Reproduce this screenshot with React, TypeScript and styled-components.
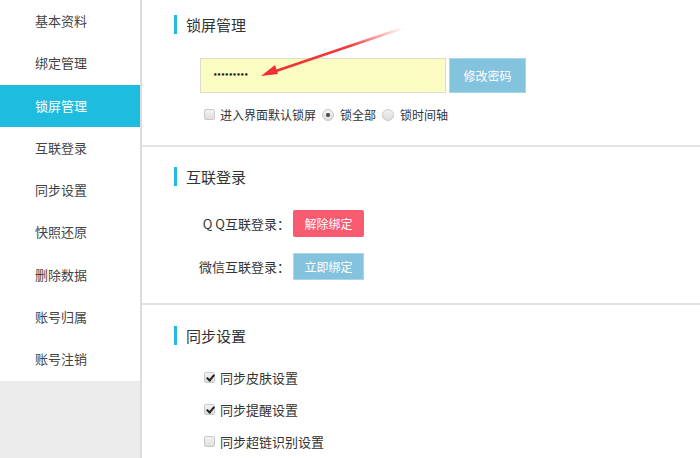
import styled, { createGlobalStyle } from "styled-components";

const GlobalStyle = createGlobalStyle`
  body {
    margin: 0;
    font-family: "Noto Sans CJK SC", "Liberation Sans", sans-serif;
    color: #333;
    background: #fff;
  }
`;

const menu = [
  "基本资料",
  "绑定管理",
  "锁屏管理",
  "互联登录",
  "同步设置",
  "快照还原",
  "删除数据",
  "账号归属",
  "账号注销",
];

const App = () => {
  return (
    <Page>
      <GlobalStyle />
      <Sidebar>
        <Menu>
          {menu.map((m) => (
            <MenuItem key={m} $active={m === "锁屏管理"}>
              {m}
            </MenuItem>
          ))}
        </Menu>
        <SideFill />
      </Sidebar>
      <Main>
        <Section $height={147} $top={15}>
          <Header>
            <Bar />
            <Title>锁屏管理</Title>
          </Header>
          <PwdRow>
            <PwdInput>•••••••••</PwdInput>
            <BlueButton $w={77} $h={35}>修改密码</BlueButton>
          </PwdRow>
          <OptionRow>
            <Box />
            <OptText>进入界面默认锁屏</OptText>
            <Radio $on />
            <OptText>锁全部</OptText>
            <Radio />
            <OptText>锁时间轴</OptText>
          </OptionRow>
          <Arrow width="150" height="60" viewBox="0 0 150 60">
            <defs>
              <linearGradient id="ag" x1="0" y1="1" x2="1" y2="0">
                <stop offset="0" stopColor="#f03030" />
                <stop offset="0.6" stopColor="#f23a3a" />
                <stop offset="1" stopColor="#ff4040" stopOpacity="0" />
              </linearGradient>
            </defs>
            <path d="M12 48 L145 3" stroke="url(#ag)" strokeWidth="2.6" strokeLinecap="round" />
            <path d="M3 51 L17 40 L20 49 Z" fill="#f03030" />
          </Arrow>
        </Section>
        <Section $height={158} $top={20}>
          <Header>
            <Bar />
            <Title>互联登录</Title>
          </Header>
          <BindList>
            <BindRow>
              <BindLabel>Q Q互联登录：</BindLabel>
              <RedButton>解除绑定</RedButton>
            </BindRow>
            <BindRow>
              <BindLabel>微信互联登录：</BindLabel>
              <BlueButton $w={71} $h={27}>立即绑定</BlueButton>
            </BindRow>
          </BindList>
        </Section>
        <LastSection>
          <Header>
            <Bar />
            <Title>同步设置</Title>
          </Header>
          <CheckList>
            <CheckRow>
              <Box $on />
              <CheckText>同步皮肤设置</CheckText>
            </CheckRow>
            <CheckRow>
              <Box $on />
              <CheckText>同步提醒设置</CheckText>
            </CheckRow>
            <CheckRow>
              <Box />
              <CheckText>同步超链识别设置</CheckText>
            </CheckRow>
          </CheckList>
        </LastSection>
      </Main>
    </Page>
  );
};
export default App;

const Page = styled.div`
  display: flex;
  width: 700px;
  height: 458px;
  overflow: hidden;
`;

const Sidebar = styled.div`
  width: 140px;
  flex-shrink: 0;
  display: flex;
  flex-direction: column;
  border-right: 2px solid #dcdcdc;
`;

const Menu = styled.div`
  display: flex;
  flex-direction: column;
  background: #fff;
`;

const MenuItem = styled.div<{ $active?: boolean }>`
  height: 42.3px;
  line-height: 42px;
  padding-left: 35px;
  font-size: 13px;
  color: ${(p) => (p.$active ? "#fff" : "#444")};
  background: ${(p) => (p.$active ? "#1ebde0" : "transparent")};
`;

const SideFill = styled.div`
  flex: 1;
  background: #ebebeb;
`;

const Main = styled.div`
  flex: 1;
  display: flex;
  flex-direction: column;
`;

const Section = styled.div<{ $height: number; $top: number }>`
  position: relative;
  height: ${(p) => p.$height}px;
  box-sizing: border-box;
  border-bottom: 2px solid #e3e3e3;
  padding-top: ${(p) => p.$top}px;
  flex-shrink: 0;
`;

const LastSection = styled.div`
  flex: 1;
  padding-top: 21px;
`;

const Header = styled.div`
  display: flex;
  align-items: center;
  height: 19px;
  padding-left: 32px;
`;

const Bar = styled.div`
  width: 3px;
  height: 19px;
  background: #1ebde0;
`;

const Title = styled.div`
  margin-left: 9px;
  font-size: 15px;
  color: #333;
  line-height: 19px;
`;

const PwdRow = styled.div`
  display: flex;
  align-items: center;
  gap: 3px;
  margin: 24px 0 0 58px;
`;

const PwdInput = styled.div`
  width: 246px;
  height: 35px;
  box-sizing: border-box;
  border: 1px solid #dcdcd0;
  background: #fafcc2;
  padding-left: 12px;
  font-family: "DejaVu Sans", sans-serif;
  font-size: 7px;
  font-weight: bold;
  letter-spacing: -0.6px;
  line-height: 33px;
  color: #222;
`;

const BlueButton = styled.div<{ $w: number; $h: number }>`
  width: ${(p) => p.$w}px;
  height: ${(p) => p.$h}px;
  box-sizing: border-box;
  border: 1px solid #a9d6ea;
  background: #84c3de;
  color: #fff;
  font-size: 12px;
  display: flex;
  align-items: center;
  justify-content: center;
`;

const RedButton = styled.div`
  width: 71px;
  height: 27px;
  border-radius: 2px;
  background: #f85a70;
  color: #fff;
  font-size: 12px;
  display: flex;
  align-items: center;
  justify-content: center;
`;

const OptionRow = styled.div`
  display: flex;
  align-items: center;
  margin: 13px 0 0 62px;
  gap: 5px;
`;

const OptText = styled.span`
  font-size: 12px;
  color: #333;
  margin-right: -3px;
`;

const Box = styled.span<{ $on?: boolean }>`
  position: relative;
  width: 9px;
  height: 9px;
  border: 1px solid #c8c8c8;
  border-radius: 2px;
  background: linear-gradient(#f2f2f2, #dedede);
  &::after {
    content: "";
    display: ${(p) => (p.$on ? "block" : "none")};
    position: absolute;
    left: 3px;
    top: 0px;
    width: 3px;
    height: 6px;
    border: solid #222;
    border-width: 0 2px 2px 0;
    transform: rotate(40deg);
  }
`;

const Radio = styled.span<{ $on?: boolean }>`
  position: relative;
  width: 10px;
  height: 10px;
  border: 1px solid #c8c8c8;
  border-radius: 50%;
  background: linear-gradient(#f2f2f2, #dcdcdc);
  margin-left: 4px;
  margin-right: 1px;
  &::after {
    content: "";
    display: ${(p) => (p.$on ? "block" : "none")};
    position: absolute;
    left: 3px;
    top: 3px;
    width: 4px;
    height: 4px;
    border-radius: 50%;
    background: #444;
  }
`;

const Arrow = styled.svg`
  position: absolute;
  left: 116px;
  top: 25px;
`;

const BindList = styled.div`
  display: flex;
  flex-direction: column;
  gap: 16px;
  margin-top: 24px;
`;

const BindRow = styled.div`
  display: flex;
  align-items: center;
`;

const BindLabel = styled.div`
  width: 148px;
  text-align: right;
  font-size: 13px;
  color: #333;
  margin-right: 3px;
`;

const CheckList = styled.div`
  display: flex;
  flex-direction: column;
  gap: 13px;
  margin: 23px 0 0 62px;
`;

const CheckRow = styled.div`
  display: flex;
  align-items: center;
  gap: 5px;
  height: 19px;
`;

const CheckText = styled.span`
  font-size: 13px;
  color: #333;
`;
